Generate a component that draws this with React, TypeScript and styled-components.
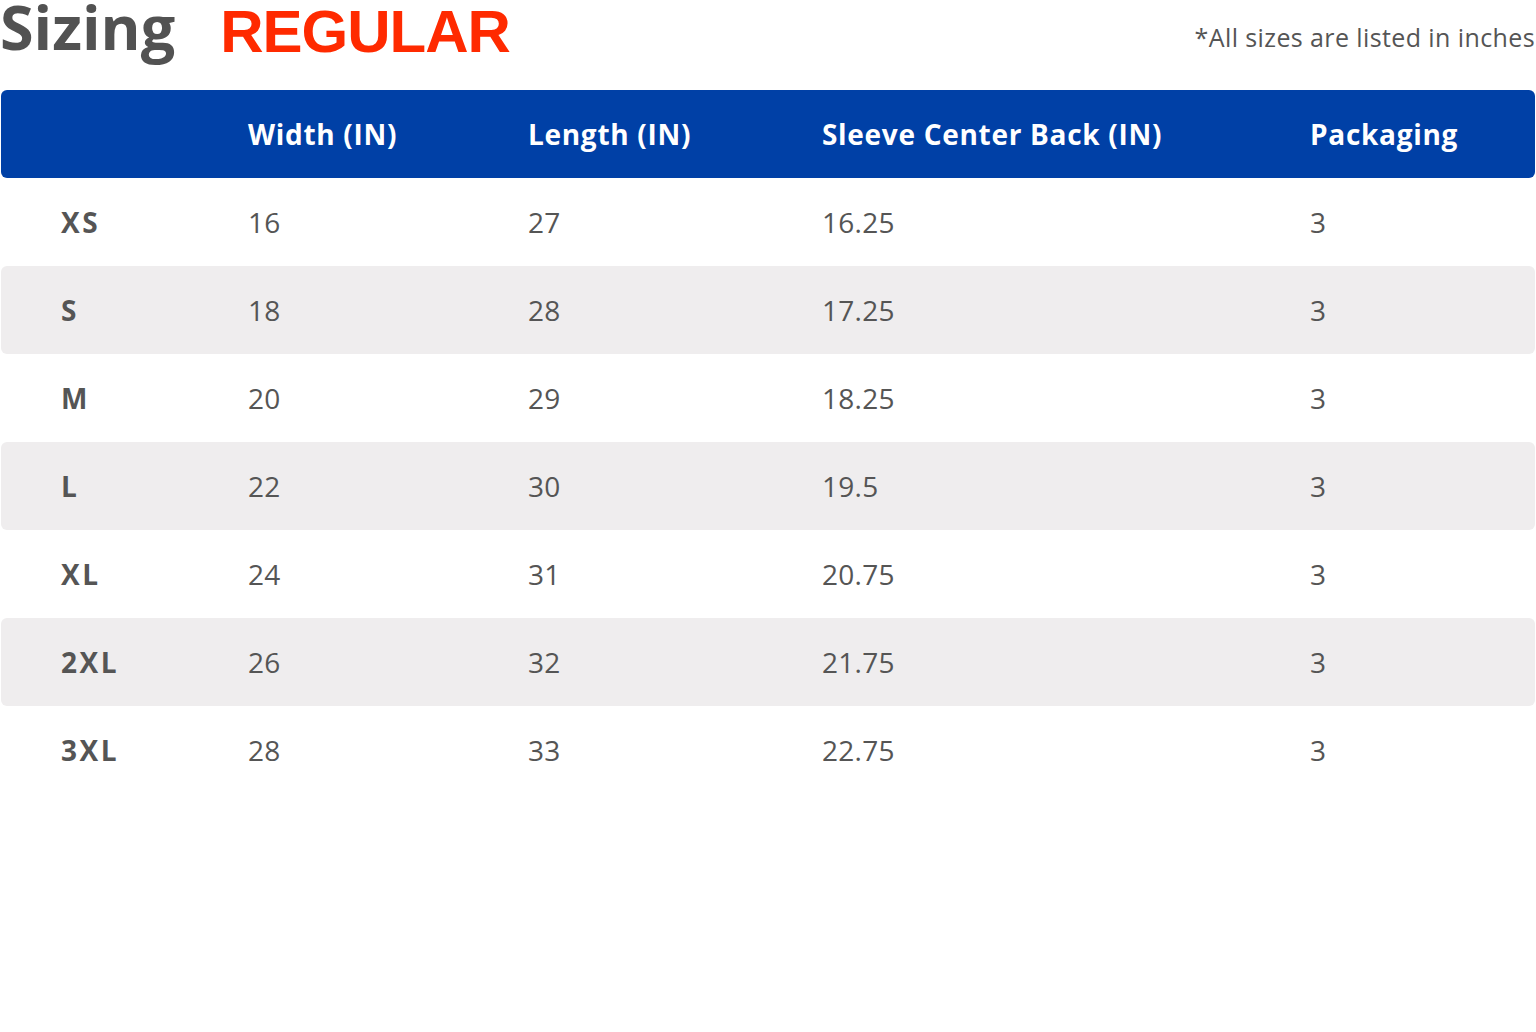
import React from "react";
import styled, { createGlobalStyle } from "styled-components";

const GlobalStyle = createGlobalStyle`
  html, body {
    margin: 0;
    padding: 0;
    background: #ffffff;
  }
  body {
    font-family: "Open Sans", "Liberation Sans", sans-serif;
  }
`;

const columns = "247px 280px 294px 488px 1fr";

const Page = styled.div`
  width: 1536px;
  height: 1032px;
  box-sizing: border-box;
  padding: 0 1px;
`;

const TitleBar = styled.div`
  display: flex;
  align-items: flex-start;
  height: 90px;
  margin-left: -1px;
`;

const Heading = styled.h1`
  margin: 0;
  font-family: "Open Sans", sans-serif;
  font-size: 61px;
  font-weight: 700;
  line-height: 54px;
  letter-spacing: 0;
  color: #525252;
`;

const FitName = styled.span`
  margin-left: 45px;
  margin-top: 2px;
  font-family: "Liberation Sans", Arial, sans-serif;
  font-size: 60px;
  font-weight: 700;
  line-height: 60px;
  letter-spacing: -1px;
  color: #ff2a00;
`;

const Note = styled.span`
  margin-left: auto;
  margin-top: 20px;
  font-size: 25px;
  line-height: 34px;
  letter-spacing: 0.4px;
  color: #555555;
`;

const Row = styled.div<{ $shade: "head" | "grey" | "white" }>`
  display: grid;
  grid-template-columns: ${columns};
  align-items: center;
  height: 88px;
  border-radius: 6px;
  background: ${(p) =>
    p.$shade === "head" ? "#0040a6" : p.$shade === "grey" ? "#efedee" : "#ffffff"};
  color: ${(p) => (p.$shade === "head" ? "#ffffff" : "#555555")};
`;

const Cell = styled.div<{ $bold?: boolean; $spacing?: string }>`
  font-size: 28px;
  font-weight: ${(p) => (p.$bold ? 700 : 400)};
  letter-spacing: ${(p) => p.$spacing ?? "0"};
  white-space: nowrap;
  &:first-child {
    padding-left: 60px;
  }
`;

const headers = ["", "Width (IN)", "Length (IN)", "Sleeve Center Back (IN)", "Packaging"];

const sizes = [
  ["XS", "16", "27", "16.25", "3"],
  ["S", "18", "28", "17.25", "3"],
  ["M", "20", "29", "18.25", "3"],
  ["L", "22", "30", "19.5", "3"],
  ["XL", "24", "31", "20.75", "3"],
  ["2XL", "26", "32", "21.75", "3"],
  ["3XL", "28", "33", "22.75", "3"],
];

export default function App() {
  return (
    <Page>
      <GlobalStyle />
      <TitleBar>
        <Heading>Sizing</Heading>
        <FitName>REGULAR</FitName>
        <Note>*All sizes are listed in inches</Note>
      </TitleBar>
      <Row $shade="head">
        {headers.map((h, i) => (
          <Cell key={i} $bold $spacing="0.7px">
            {h}
          </Cell>
        ))}
      </Row>
      {sizes.map((r, i) => (
        <Row key={r[0]} $shade={i % 2 === 1 ? "grey" : "white"}>
          {r.map((v, j) => (
            <Cell key={j} $bold={j === 0} $spacing={j === 0 ? "2.5px" : "0.3px"}>
              {v}
            </Cell>
          ))}
        </Row>
      ))}
    </Page>
  );
}
